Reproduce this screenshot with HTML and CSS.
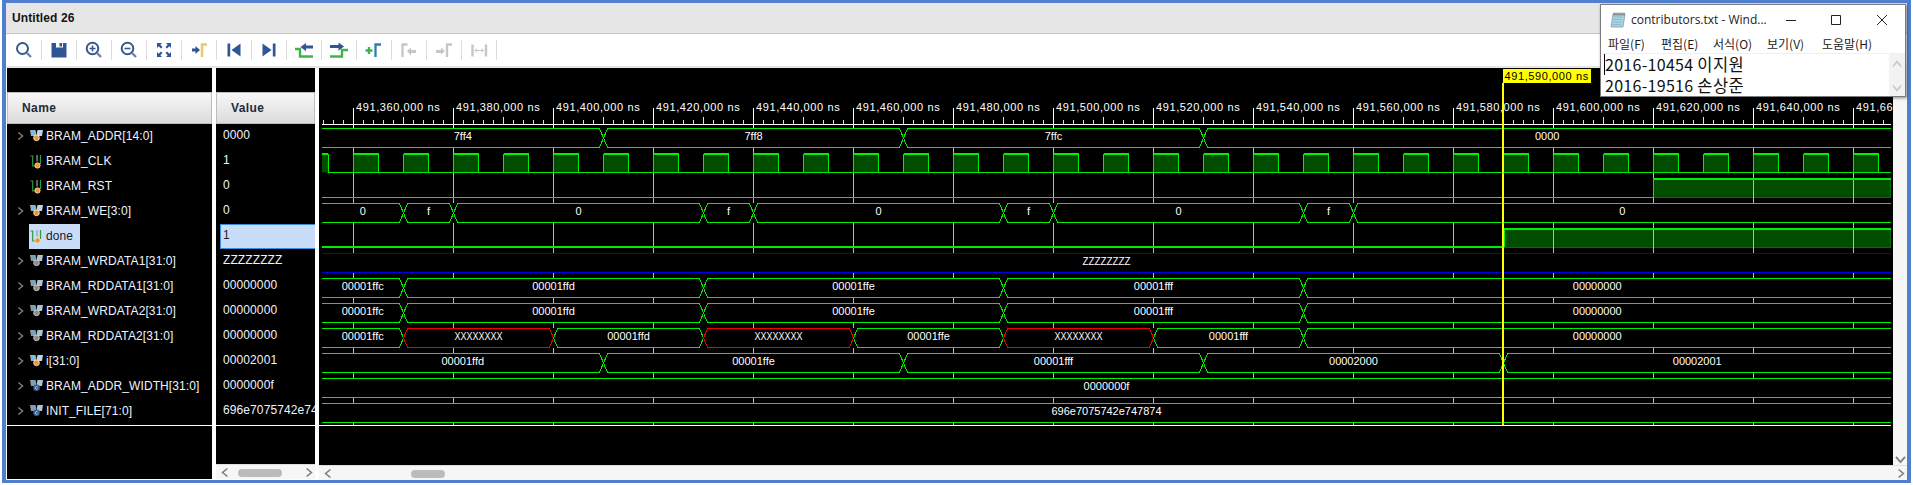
FILE: index.html
```html
<!DOCTYPE html>
<html lang="en">
<head>
<meta charset="utf-8">
<title>Untitled 26</title>
<link rel="stylesheet" href="styles.css">
</head>
<body>
<svg class="defs" width="0" height="0" aria-hidden="true">
  <defs>
    <symbol id="bus-o" viewBox="0 0 13 13"><path d="M0 1h5.500l.7 3v3L1 7z" fill="#8ab6d6"/><path d="M13 1H7.500L6.800 4v3H12z" fill="#bcd4e6"/><circle cx="6.500" cy="8.800" r="2.900" fill="#f0952a" stroke="#fff" stroke-width=".7"/></symbol>
    <symbol id="bus-g" viewBox="0 0 13 13"><path d="M0 1h5.500l.7 3v3L1 7z" fill="#7f9fb6"/><path d="M13 1H7.500L6.800 4v3H12z" fill="#aec2d0"/><circle cx="6.500" cy="8.800" r="2.900" fill="#8d8d8d" stroke="#e8e8e8" stroke-width=".7"/></symbol>
    <symbol id="bus-c" viewBox="0 0 13 13"><path d="M0 1h5.500l.7 3v3L1 7z" fill="#7f9fb6"/><path d="M13 1H7.500L6.800 4v3H12z" fill="#aec2d0"/><circle cx="6.500" cy="8.800" r="3.300" fill="#3f5f95"/><path d="M7.600 8a1.300 1.300 0 1 0 0 1.700" fill="none" stroke="#dfe8f5" stroke-width=".7"/></symbol>
    <symbol id="bit-o" viewBox="0 0 13 14"><path d="M.5 1h2.200v10H5M10.500 0v9" fill="none" stroke="#2f9a3f" stroke-width="1.200"/><path d="M7 0v6.500" fill="none" stroke="#9aa0a0" stroke-width="1.200"/><circle cx="7.500" cy="10.500" r="2.700" fill="#f0952a" stroke="#fff" stroke-width=".6"/></symbol>

    <symbol id="t-search" viewBox="0 0 20 20"><circle cx="8.500" cy="8.500" r="5.500" fill="none" stroke="#35598f" stroke-width="2"/><path d="M12.800 12.800L17 17" stroke="#6c87ad" stroke-width="2.400"/></symbol>
    <symbol id="t-save" viewBox="0 0 20 20"><path d="M2.500 3h15v14.500h-15z" fill="#2f5597"/><path d="M7 3h7v4.500H7z" fill="#fff"/><path d="M10.500 3h2.500v3.500h-2.500z" fill="#2f5597"/></symbol>
    <symbol id="t-zin" viewBox="0 0 20 20"><circle cx="8.500" cy="8.500" r="5.800" fill="none" stroke="#35598f" stroke-width="2"/><path d="M13 13l4 4" stroke="#6c87ad" stroke-width="2.400"/><path d="M8.500 5.500v6M5.500 8.500h6" stroke="#35598f" stroke-width="1.600"/></symbol>
    <symbol id="t-zout" viewBox="0 0 20 20"><circle cx="8.500" cy="8.500" r="5.800" fill="none" stroke="#35598f" stroke-width="2"/><path d="M13 13l4 4" stroke="#6c87ad" stroke-width="2.400"/><path d="M5.500 8.500h6" stroke="#35598f" stroke-width="1.600"/></symbol>
    <symbol id="t-fit" viewBox="0 0 20 20"><g fill="#2f5597"><path d="M3 3h5L6.300 4.700 8.500 7 7 8.500 4.700 6.300 3 8z"/><path d="M17 3h-5l1.700 1.700L11.500 7 13 8.500l2.300-2.200L17 8z"/><path d="M3 17h5l-1.700-1.700L8.500 13 7 11.500l-2.300 2.200L3 12z"/><path d="M17 17h-5l1.700-1.700-2.200-2.300 1.500-1.500 2.300 2.200L17 12z"/></g></symbol>
    <symbol id="t-mark" viewBox="0 0 20 20"><path d="M3 8.500h3.500V6L11 10l-4.500 4v-2.500H3z" fill="#2f5597"/><path d="M13 17V4.500h5" fill="none" stroke="#e8c96a" stroke-width="2.500"/></symbol>
    <symbol id="t-first" viewBox="0 0 20 20"><path d="M3.500 3.500h2.700v13H3.500z" fill="#2f5597"/><path d="M16.500 3.500v13L7.500 10z" fill="#2f5597"/></symbol>
    <symbol id="t-last" viewBox="0 0 20 20"><path d="M13.800 3.500h2.700v13h-2.700z" fill="#2f5597"/><path d="M3.500 3.500v13l9-6.500z" fill="#2f5597"/></symbol>
    <symbol id="t-prev" viewBox="0 0 20 20"><path d="M1 9h5v7.500h13" fill="none" stroke="#3db54a" stroke-width="2.400"/><path d="M6.500 7L12 3v2.600h7v3h-7v2.600z" fill="#2f5597"/></symbol>
    <symbol id="t-next" viewBox="0 0 20 20"><path d="M1 16.500h12V10h6" fill="none" stroke="#3db54a" stroke-width="2.400"/><path d="M15 6.500L9.500 2.500v2.600H1v3h8.500v2.600z" fill="#2f5597"/></symbol>
    <symbol id="t-add" viewBox="0 0 20 20"><path d="M1.500 10.500h7M5 7v7" stroke="#3db54a" stroke-width="2.400"/><path d="M11.500 17V4.500H17" fill="none" stroke="#2a80b5" stroke-width="2.300"/></symbol>
    <symbol id="t-gprev" viewBox="0 0 20 20"><path d="M3.500 17V4.500h5" fill="none" stroke="#c6c6c6" stroke-width="2.300"/><path d="M8 11l4-3.500V10h5v3h-5v2.500z" fill="#c6c6c6"/></symbol>
    <symbol id="t-gnext" viewBox="0 0 20 20"><path d="M2 10h5V7.500l4 3.500-4 3.500V13H2z" fill="#c6c6c6"/><path d="M13 17V4.500h5" fill="none" stroke="#c6c6c6" stroke-width="2.300"/></symbol>
    <symbol id="t-gspan" viewBox="0 0 20 20"><path d="M3.500 4.500v12M17 4.500v12" stroke="#c6c6c6" stroke-width="2.400"/><path d="M6 10.500h8.500M8 8.500l-2 2 2 2M12.500 8.500l2 2-2 2" fill="none" stroke="#c6c6c6"/></symbol>

    <symbol id="chev-l" viewBox="0 0 10 12"><path d="M8 1L2 6l6 5" fill="none" stroke="#7e7e7e" stroke-width="2"/></symbol>
    <symbol id="chev-r" viewBox="0 0 10 12"><path d="M2 1l6 5-6 5" fill="none" stroke="#7e7e7e" stroke-width="2"/></symbol>
    <symbol id="chev-d" viewBox="0 0 12 10"><path d="M1 2l5 6 5-6" fill="none" stroke="#7e7e7e" stroke-width="2"/></symbol>
    <symbol id="chev-u" viewBox="0 0 12 10"><path d="M1 8l5-6 5 6" fill="none" stroke="#c8c8c8" stroke-width="2"/></symbol>
    <symbol id="chev-ds" viewBox="0 0 12 10"><path d="M1 2l5 6 5-6" fill="none" stroke="#c8c8c8" stroke-width="2"/></symbol>
  </defs>
</svg>

<div class="window">
  <header class="titlebar">Untitled 26</header>
  <nav class="toolbar">
    <span class="tool"><svg class="ti"><use href="#t-search"/></svg></span>
    <span class="tool"><svg class="ti"><use href="#t-save"/></svg></span>
    <span class="tool"><svg class="ti"><use href="#t-zin"/></svg></span>
    <span class="tool"><svg class="ti"><use href="#t-zout"/></svg></span>
    <span class="tool"><svg class="ti"><use href="#t-fit"/></svg></span>
    <span class="tool"><svg class="ti"><use href="#t-mark"/></svg></span>
    <span class="tool"><svg class="ti"><use href="#t-first"/></svg></span>
    <span class="tool"><svg class="ti"><use href="#t-last"/></svg></span>
    <span class="tool"><svg class="ti"><use href="#t-prev"/></svg></span>
    <span class="tool"><svg class="ti"><use href="#t-next"/></svg></span>
    <span class="tool"><svg class="ti"><use href="#t-add"/></svg></span>
    <span class="tool"><svg class="ti"><use href="#t-gprev"/></svg></span>
    <span class="tool"><svg class="ti"><use href="#t-gnext"/></svg></span>
    <span class="tool"><svg class="ti"><use href="#t-gspan"/></svg></span>
  </nav>
  <main class="main">
    <section class="panel names">
      <div class="spacer"></div>
      <div class="colhead colhead-name">Name</div>
      <div class="list">
        <div class="row"><svg class="twist"><use href="#chev-r"/></svg><span class="sig"><svg class="ic"><use href="#bus-o"/></svg>BRAM_ADDR[14:0]</span></div>
        <div class="row"><span class="twist"></span><span class="sig"><svg class="ic ic-bit"><use href="#bit-o"/></svg>BRAM_CLK</span></div>
        <div class="row"><span class="twist"></span><span class="sig"><svg class="ic ic-bit"><use href="#bit-o"/></svg>BRAM_RST</span></div>
        <div class="row"><svg class="twist"><use href="#chev-r"/></svg><span class="sig"><svg class="ic"><use href="#bus-o"/></svg>BRAM_WE[3:0]</span></div>
        <div class="row"><span class="twist"></span><span class="sig sel"><svg class="ic ic-bit"><use href="#bit-o"/></svg>done</span></div>
        <div class="row"><svg class="twist"><use href="#chev-r"/></svg><span class="sig"><svg class="ic"><use href="#bus-g"/></svg>BRAM_WRDATA1[31:0]</span></div>
        <div class="row"><svg class="twist"><use href="#chev-r"/></svg><span class="sig"><svg class="ic"><use href="#bus-g"/></svg>BRAM_RDDATA1[31:0]</span></div>
        <div class="row"><svg class="twist"><use href="#chev-r"/></svg><span class="sig"><svg class="ic"><use href="#bus-g"/></svg>BRAM_WRDATA2[31:0]</span></div>
        <div class="row"><svg class="twist"><use href="#chev-r"/></svg><span class="sig"><svg class="ic"><use href="#bus-g"/></svg>BRAM_RDDATA2[31:0]</span></div>
        <div class="row"><svg class="twist"><use href="#chev-r"/></svg><span class="sig"><svg class="ic"><use href="#bus-o"/></svg>i[31:0]</span></div>
        <div class="row"><svg class="twist"><use href="#chev-r"/></svg><span class="sig"><svg class="ic"><use href="#bus-c"/></svg>BRAM_ADDR_WIDTH[31:0]</span></div>
        <div class="row"><svg class="twist"><use href="#chev-r"/></svg><span class="sig"><svg class="ic"><use href="#bus-c"/></svg>INIT_FILE[71:0]</span></div>
      </div>
    </section>
    <section class="values">
      <div class="panel values-body">
        <div class="spacer"></div>
        <div class="colhead colhead-value">Value</div>
        <div class="list">
          <div class="vrow">0000</div>
          <div class="vrow">1</div>
          <div class="vrow">0</div>
          <div class="vrow">0</div>
          <div class="vrow vsel">1</div>
          <div class="vrow">ZZZZZZZZ</div>
          <div class="vrow">00000000</div>
          <div class="vrow">00000000</div>
          <div class="vrow">00000000</div>
          <div class="vrow">00002001</div>
          <div class="vrow">0000000f</div>
          <div class="vrow">696e7075742e747874</div>
        </div>
      </div>
      <div class="hscroll">
        <svg class="arrow-h"><use href="#chev-l"/></svg>
        <span class="thumb thumb-value"></span>
        <svg class="arrow-h arrow-end"><use href="#chev-r"/></svg>
      </div>
    </section>
    <section class="waves">
      <div class="waves-top">
        <svg id="wave" class="wavecanvas" viewBox="319 68 1574 397" width="1574" height="397"></svg>
        <div class="vscroll"><svg class="arrow-v"><use href="#chev-d"/></svg></div>
      </div>
      <div class="hscroll">
        <svg class="arrow-h"><use href="#chev-l"/></svg>
        <span class="thumb thumb-wave"></span>
        <svg class="arrow-h arrow-end"><use href="#chev-r"/></svg>
      </div>
    </section>
  </main>
</div>

<aside class="notepad">
  <div class="np-title">
    <svg class="np-icon" viewBox="0 0 16 16">
      <path d="M3 2h12l-2 13H1z" fill="#a9d3e2" stroke="#7f8f96" stroke-width=".7"/>
      <path d="M3.500 5h9M3 7.500h9M2.700 10h9M2.300 12.500h9" stroke="#7fb1c6" stroke-width=".7"/>
      <path d="M4 .5v3M6 .5v3M8 .5v3M10 .5v3M12 .5v3M14 .5v3" stroke="#555" stroke-width=".8"/>
    </svg>
    <span class="np-name">contributors.txt - Wind...</span>
    <svg class="np-btn np-min" viewBox="0 0 10 10"><path d="M0 5.500h10" stroke="#222"/></svg>
    <svg class="np-btn np-max" viewBox="0 0 10 10"><path d="M.5.500h9v9h-9z" fill="none" stroke="#222"/></svg>
    <svg class="np-btn np-close" viewBox="0 0 10 10"><path d="M0 0l10 10M10 0L0 10" stroke="#222"/></svg>
  </div>
  <div class="np-menu">
    <span class="np-item np-i1">파일(F)</span>
    <span class="np-item np-i2">편집(E)</span>
    <span class="np-item np-i3">서식(O)</span>
    <span class="np-item np-i4">보기(V)</span>
    <span class="np-item">도움말(H)</span>
  </div>
  <div class="np-body">
    <div class="np-text">
      <div class="np-line np-caret">2016-10454 <span class="np-ko">이지원</span></div>
      <div class="np-line">2016-19516 <span class="np-ko">손상준</span></div>
    </div>
    <div class="np-scroll">
      <svg class="np-arrow"><use href="#chev-u"/></svg>
      <svg class="np-arrow"><use href="#chev-ds"/></svg>
    </div>
  </div>
</aside>
<script src="wave.js"></script>
</body>
</html>
```
FILE: styles.css
```css
* { box-sizing: border-box; }
html, body { margin: 0; padding: 0; }
body {
  position: relative;
  width: 1913px;
  height: 485px;
  overflow: hidden;
  background: #fff;
  font-family: "Liberation Sans", Arial, sans-serif;
  font-size: 12px;
}
.defs { position: absolute; }

.window {
  width: 1909px;
  height: 483px;
  margin-left: 2px;
  display: flex;
  flex-direction: column;
  border: solid #4f7fce;
  border-width: 3px 4px;
  background: #fff;
}
.titlebar {
  height: 31px;
  flex: none;
  display: flex;
  align-items: center;
  padding-left: 6px;
  padding-bottom: 1px;
  background: #e6e6e6;
  border-bottom: 1px solid #c4c4c4;
  font-weight: bold;
  color: #141414;
  letter-spacing: .1px;
}
.toolbar {
  height: 34px;
  flex: none;
  display: flex;
  align-items: center;
  padding: 0 0 0 1px;
  background: #fff;
  border-bottom: 2px solid #e6e6e6;
}
.tool {
  width: 35px;
  height: 20px;
  display: flex;
  align-items: center;
  justify-content: center;
  border-right: 1px solid #dcdcdc;
}
.ti { width: 20px; height: 20px; margin-right: 1px; }

.main {
  flex: 1;
  min-height: 0;
  display: flex;
  padding-left: 1px;
  background: #fff;
}
.panel { background: #000; overflow: hidden; }
.names { width: 205px; flex: none; margin-bottom: 1px; }
.values { width: 99px; flex: none; margin-left: 4px; display: flex; flex-direction: column; }
.values-body { height: 396px; flex: none; }
.waves { width: 1588px; flex: none; margin-left: 4px; display: flex; flex-direction: column; }
.waves-top { display: flex; height: 397px; flex: none; }

.spacer { height: 24px; background: #000; }
.colhead {
  height: 32px;
  display: flex;
  align-items: center;
  background: linear-gradient(#f7f7f7, #dcdcdc);
  border: 1px solid #bdbdbd;
  font-weight: bold;
  color: #1f2a3a;
  letter-spacing: .4px;
}
.colhead-name { padding-left: 14px; }
.colhead-value { padding-left: 14px; }

.list {
  height: 302px;
  border-bottom: 1px solid #fff;
  padding-bottom: 1px;
  color: #eef3ff;
  letter-spacing: .1px;
}
.row { height: 25px; display: flex; align-items: center; white-space: nowrap; }
.twist { width: 7px; height: 10px; margin-left: 10px; margin-bottom: 1px; flex: none; }
.sig { height: 25px; display: inline-flex; align-items: center; margin-left: 5px; padding: 0 7px 2px 1px; }
.ic { width: 13px; height: 13px; margin-right: 3px; flex: none; }
.ic-bit { height: 14px; margin-top: 2px; }
.sel { background: #c9dcf8; color: #222; }

.vrow { height: 25px; line-height: 23px; padding-left: 7px; white-space: nowrap; overflow: hidden; }
.vsel {
  margin-left: 4px;
  padding-left: 2px;
  line-height: 21px;
  background: #c9dcf8;
  border: 1px solid #3a8fe0;
  border-right: none;
  color: #222;
}

.wavecanvas { display: block; flex: none; background: #000; }
.vscroll {
  width: 14px;
  flex: none;
  display: flex;
  align-items: flex-end;
  justify-content: center;
  padding-bottom: 1px;
  background: #f6f6f6;
}
.arrow-v { width: 11px; height: 9px; }

.hscroll {
  height: 15px;
  flex: none;
  display: flex;
  align-items: center;
  padding: 1px 2px 0 5px;
  background: #f6f6f6;
  border-top: 1px solid #dedede;
}
.arrow-h { width: 8px; height: 11px; flex: none; }
.arrow-end { margin-left: auto; }
.thumb { height: 8px; border-radius: 4px; background: #bcbcbc; flex: none; }
.thumb-value { width: 44px; margin-left: 9px; }
.thumb-wave { width: 34px; margin-left: 79px; }

.wlabel { font-family: "Liberation Sans", Arial, sans-serif; font-size: 11px; fill: #fff; }
.wruler { letter-spacing: .6px; }
.wcursor { fill: #000; letter-spacing: .6px; }

.notepad {
  position: absolute;
  left: 1600px;
  top: 4px;
  width: 306px;
  height: 93px;
  display: flex;
  flex-direction: column;
  background: #fff;
  border: 1px solid #7b7b7b;
  box-shadow: 1px 1px 3px rgba(0, 0, 0, .45);
  font-family: "Noto Sans CJK KR", "Noto Sans", sans-serif;
  color: #1c1c1c;
}
.np-title { height: 29px; flex: none; display: flex; align-items: center; padding-left: 9px; }
.np-icon { width: 16px; height: 16px; flex: none; }
.np-name { margin-left: 5px; width: 141px; font-family: "Open Sans", "Noto Sans", sans-serif; font-size: 12px; white-space: nowrap; color: #222; }
.np-btn { width: 10px; height: 10px; flex: none; }
.np-min { margin-left: 14px; }
.np-max { margin-left: 35px; }
.np-close { margin-left: 36px; }
.np-menu {
  height: 19px;
  flex: none;
  display: flex;
  align-items: center;
  padding-left: 7px;
  font-size: 12px;
  background: #fff;
}
.np-item { flex: none; }
.np-i1 { width: 53px; }
.np-i2 { width: 52px; }
.np-i3 { width: 54px; }
.np-i4 { width: 55px; }
.np-body { flex: 1; display: flex; min-height: 0; border-top: 1px solid #f0f0f0; }
.np-text { flex: 1; padding-left: 3px; }
.np-line { height: 21px; line-height: 21px; font-size: 16px; letter-spacing: .3px; white-space: nowrap; color: #111; padding-left: 1px; }
.np-ko { font-size: 16.500px; letter-spacing: .4px; }
.np-caret { border-left: 1px solid #000; padding-left: 0; }
.np-scroll {
  width: 16px;
  flex: none;
  display: flex;
  flex-direction: column;
  align-items: center;
  justify-content: space-between;
  padding: 6px 0 4px;
  background: #f2f2f2;
}
.np-arrow { width: 10px; height: 8px; }
```
FILE: wave.js
```js
(function () {
  var NS = 'http://www.w3.org/2000/svg';
  var svg = document.getElementById('wave');
  var L = 322, R = 1891, GREEN = '#00ee00', FILL = '#004d00', EDGE = '#007000';

  function add(tag, attrs, text) {
    var el = document.createElementNS(NS, tag);
    for (var k in attrs) el.setAttribute(k, attrs[k]);
    if (text) el.textContent = text;
    svg.appendChild(el);
    return el;
  }
  function line(x1, y1, x2, y2, color, w) {
    add('line', { x1: x1, y1: y1, x2: x2, y2: y2, stroke: color, 'stroke-width': w || 1, 'shape-rendering': 'crispEdges' });
  }
  function topOf(k) { return 128 + 25 * k; }
  function labelAt(x, y, t, cls) {
    var anchored = cls === 'wruler' || cls === 'wcursor';
    var attrs = { x: x, y: y, 'class': 'wlabel ' + (cls || ''), 'text-anchor': anchored ? 'start' : 'middle' };
    if (t === 'XXXXXXXX' || t === 'ZZZZZZZZ') {
      attrs.textLength = 48;
      attrs.lengthAdjust = 'spacingAndGlyphs';
    }
    return add('text', attrs, t);
  }

  var x, i;

  /* ruler */
  line(L, 124.5, R, 124.5, '#fff');
  for (x = 353.5 - 30; x < R; x += 10) {
    var off = Math.round(x - 353.5);
    var rem = ((off % 100) + 100) % 100;
    if (rem === 0) continue;
    line(x, rem === 50 ? 117 : 120, x, 124, '#ddd');
  }

  /* signal fills */
  function fillRect(x1, x2, y1, y2) {
    add('rect', { x: x1, y: y1, width: x2 - x1, height: y2 - y1, fill: FILL, stroke: EDGE, 'stroke-width': 1, 'shape-rendering': 'crispEdges' });
  }
  var clkHi = 154, clkLo = 172.5;
  add('rect', { x: L, y: clkHi, width: 328 - L, height: clkLo - clkHi, fill: FILL });
  for (x = 353.5; x < R; x += 50) fillRect(x, x + 25, clkHi, clkLo);
  fillRect(1653.5, 1890.5, 179, 197.5);
  fillRect(1504.5, 1890.5, 229, 247);

  /* grid */
  for (x = 353.5, i = 0; x < R; x += 100, i++) {
    line(x, 108, x, 128, '#fff');
    line(x, 128, x, 425, '#b8b8b8');
    var label = '491,' + (360 + 20 * i) + ',000 ns';
    labelAt(x + 2.5, 110.5, label, 'wruler');
  }

  /* buses */
  function bus(k, segs, color) {
    var t = topOf(k), ty = t + 0.5, by = t + 19.5, mid = (ty + by) / 2;
    add('rect', { x: L - 3, y: t, width: R - L + 6, height: 20, fill: '#000' });
    segs.forEach(function (s) {
      var a = s[0], e = s[1], c = s[3] || color || GREEN;
      var aOpen = a <= L, eOpen = e >= R;
      var ax = aOpen ? L : a + 4, ex = eOpen ? R : e - 4;
      var d = 'M' + ax + ' ' + ty + 'L' + ex + ' ' + ty;
      if (!eOpen) d += 'L' + e + ' ' + mid + 'L' + ex + ' ' + by;
      else d += 'M' + ex + ' ' + by;
      d += 'L' + ax + ' ' + by;
      if (!aOpen) d += 'L' + a + ' ' + mid + 'L' + ax + ' ' + ty;
      add('path', { d: d, fill: 'none', stroke: c, 'stroke-width': 1, 'shape-rendering': 'crispEdges' });
      if (s[2]) labelAt((a + e) / 2, t + 11.5, s[2]);
    });
  }

  function seq(points, labels, colors) {
    var out = [];
    for (var n = 0; n < labels.length; n++) {
      out.push([points[n], points[n + 1], labels[n], colors && colors[n]]);
    }
    return out;
  }

  bus(0, seq([L, 603.5, 903.5, 1203.5, R], ['7ff4', '7ff8', '7ffc', '0000']));
  bus(3, seq([L, 403.5, 453.5, 703.5, 753.5, 1003.5, 1053.5, 1303.5, 1353.5, R],
    ['0', 'f', '0', 'f', '0', 'f', '0', 'f', '0']));
  bus(5, [[L, R, 'ZZZZZZZZ']], '#0000e6');
  var data = ['00001ffc', '00001ffd', '00001ffe', '00001fff', '00000000'];
  var dp = [L, 403.5, 703.5, 1003.5, 1303.5, R];
  bus(6, seq(dp, data));
  bus(7, seq(dp, data));
  var RED = '#f00000';
  bus(8, seq([L, 403.5, 553.5, 703.5, 853.5, 1003.5, 1153.5, 1303.5, R],
    ['00001ffc', 'XXXXXXXX', '00001ffd', 'XXXXXXXX', '00001ffe', 'XXXXXXXX', '00001fff', '00000000'],
    [null, RED, null, RED, null, RED, null, null]));
  bus(9, seq([L, 603.5, 903.5, 1203.5, 1503.5, R], ['00001ffd', '00001ffe', '00001fff', '00002000', '00002001']));
  bus(10, [[L, R, '0000000f']]);
  bus(11, [[L, R, '696e7075742e747874']]);

  /* clock outline */
  function thick(d, w) {
    add('path', { d: d, fill: 'none', stroke: GREEN, 'stroke-width': w, 'shape-rendering': 'crispEdges' });
  }
  thick('M328 ' + clkLo + 'H' + R, 1);
  thick('M' + L + ' ' + clkHi + 'H328', 2);
  thick('M328.5 ' + clkHi + 'V' + clkLo, 1);
  for (x = 353.5; x < R; x += 50) {
    thick('M' + x + ' ' + clkLo + 'V' + clkHi, 1);
    thick('M' + (x + 25) + ' ' + clkLo + 'V' + clkHi, 1);
    thick('M' + x + ' ' + clkHi + 'H' + (x + 25.5), 2);
  }

  /* reset */
  thick('M' + L + ' 197.5H1653.5', 1);
  thick('M1653.5 197.500V179', 1);
  thick('M1653 179H' + R, 2);

  /* done */
  thick('M' + L + ' 247H1504', 2);
  thick('M1504.5 247V229', 1);
  thick('M1504 229H' + R, 2);

  /* bottom line */
  line(319, 425.5, R, 425.5, '#fff');

  /* cursor */
  add('rect', { x: 1502, y: 83, width: 2, height: 342, fill: '#ffff00' });
  add('rect', { x: 1503, y: 69, width: 88, height: 14, fill: '#ffff00' });
  labelAt(1504.5, 79.5, '491,590,000 ns', 'wcursor');
})();
```
